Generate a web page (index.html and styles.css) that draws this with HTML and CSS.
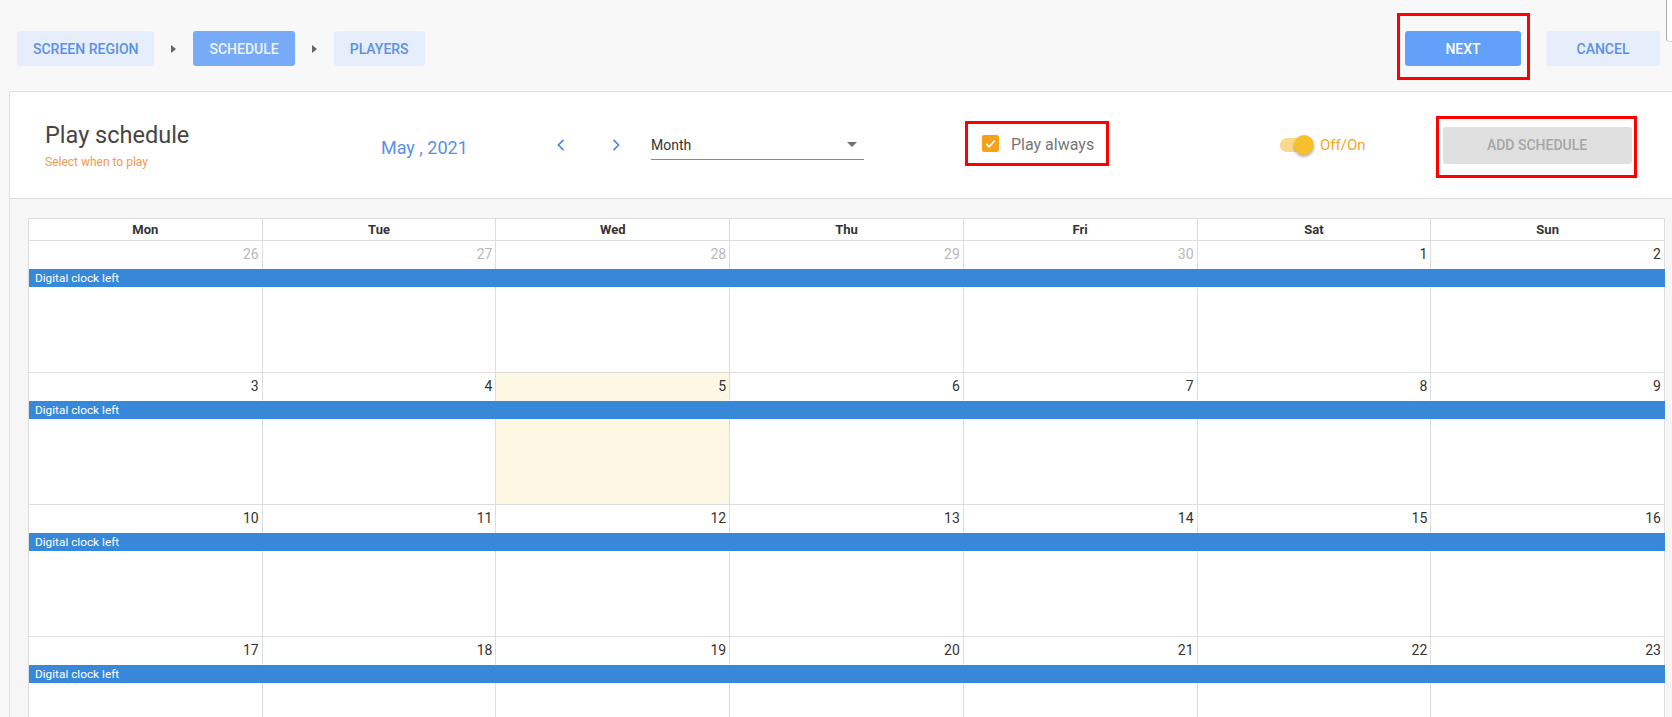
FILE: index.html
```html
<!DOCTYPE html>
<html lang="en">
<head>
    <meta charset="UTF-8">
    <meta name="viewport" content="width=device-width, initial-scale=1.0">
    <title>Play schedule</title>
    <link rel="stylesheet" href="styles.css">
</head>
<body>
    <div class="scroll-edge"></div>

    <div class="topbar">
        <div class="steps">
            <button class="step">Screen region</button>
            <span class="step-arrow"></span>
            <button class="step active">Schedule</button>
            <span class="step-arrow"></span>
            <button class="step">Players</button>
        </div>
        <div class="actions">
            <div class="mark next-mark">
                <button class="btn-next">Next</button>
            </div>
            <button class="btn-cancel">Cancel</button>
        </div>
    </div>

    <div class="panel">
        <div class="panel-header">
            <div class="title-block">
                <div class="title">Play schedule</div>
                <div class="subtitle">Select when to play</div>
            </div>
            <div class="month-label">May , 2021</div>
            <button class="nav-btn prev">
                <svg width="16" height="16" viewBox="0 0 24 24"><polyline points="15 5 8 12 15 19" fill="none" stroke="#4a86e8" stroke-width="2.6" stroke-linecap="round" stroke-linejoin="round"/></svg>
            </button>
            <button class="nav-btn next">
                <svg width="16" height="16" viewBox="0 0 24 24"><polyline points="9 5 16 12 9 19" fill="none" stroke="#4a86e8" stroke-width="2.6" stroke-linecap="round" stroke-linejoin="round"/></svg>
            </button>
            <div class="view-select">
                <span>Month</span>
                <span class="caret"></span>
            </div>
            <div class="mark play-always">
                <span class="checkbox">
                    <svg width="13" height="13" viewBox="0 0 24 24"><polyline points="4 12.5 9.5 18 20 6.5" fill="none" stroke="#fff" stroke-width="3"/></svg>
                </span>
                <span class="check-label">Play always</span>
            </div>
            <div class="toggle">
                <span class="track"><span class="knob"></span></span>
                <span class="toggle-label">Off/On</span>
            </div>
            <div class="mark add-mark">
                <button class="btn-add" disabled>Add schedule</button>
            </div>
        </div>

        <div class="calendar-area">
            <div class="calendar">
                <div class="day-names">
                    <div>Mon</div><div>Tue</div><div>Wed</div><div>Thu</div><div>Fri</div><div>Sat</div><div>Sun</div>
                </div>

                <div class="week">
                    <div class="cell c1"></div><div class="cell c2"></div><div class="cell c3"></div><div class="cell c4"></div><div class="cell c5"></div><div class="cell c6"></div><div class="cell c7"></div>
                    <div class="num c1 other">26</div><div class="num c2 other">27</div><div class="num c3 other">28</div><div class="num c4 other">29</div><div class="num c5 other">30</div><div class="num c6">1</div><div class="num c7">2</div>
                    <div class="event">Digital clock left</div>
                </div>

                <div class="week">
                    <div class="cell c1"></div><div class="cell c2"></div><div class="cell c3 today"></div><div class="cell c4"></div><div class="cell c5"></div><div class="cell c6"></div><div class="cell c7"></div>
                    <div class="num c1">3</div><div class="num c2">4</div><div class="num c3">5</div><div class="num c4">6</div><div class="num c5">7</div><div class="num c6">8</div><div class="num c7">9</div>
                    <div class="event">Digital clock left</div>
                </div>

                <div class="week">
                    <div class="cell c1"></div><div class="cell c2"></div><div class="cell c3"></div><div class="cell c4"></div><div class="cell c5"></div><div class="cell c6"></div><div class="cell c7"></div>
                    <div class="num c1">10</div><div class="num c2">11</div><div class="num c3">12</div><div class="num c4">13</div><div class="num c5">14</div><div class="num c6">15</div><div class="num c7">16</div>
                    <div class="event">Digital clock left</div>
                </div>

                <div class="week">
                    <div class="cell c1"></div><div class="cell c2"></div><div class="cell c3"></div><div class="cell c4"></div><div class="cell c5"></div><div class="cell c6"></div><div class="cell c7"></div>
                    <div class="num c1">17</div><div class="num c2">18</div><div class="num c3">19</div><div class="num c4">20</div><div class="num c5">21</div><div class="num c6">22</div><div class="num c7">23</div>
                    <div class="event">Digital clock left</div>
                </div>
            </div>
        </div>
    </div>
</body>
</html>
```

FILE: styles.css
```css
body {
    font-family: Roboto, 'Liberation Sans', sans-serif;
    background-color: #f8f8f8;
    margin: 0;
    padding: 0;
    width: 1672px;
    height: 717px;
    overflow: hidden;
    position: relative;
}

button {
    font-family: inherit;
    border: none;
    cursor: pointer;
}

.scroll-edge {
    position: absolute;
    top: 0;
    right: 0;
    width: 5px;
    height: 41px;
    border-left: 1px solid #a9a9a9;
    border-bottom: 1px solid #d0d0d0;
    border-bottom-left-radius: 4px;
    background-color: #fff;
}

/* top bar */
.topbar {
    height: 91px;
    box-sizing: border-box;
    display: flex;
    justify-content: space-between;
    padding-left: 17px;
}

.steps {
    display: flex;
    align-items: center;
    height: 35px;
    margin-top: 31px;
}

.step {
    height: 35px;
    padding: 0 16px;
    background-color: #e7eefb;
    color: #5b90e8;
    font-size: 14px;
    font-weight: 500;
    text-transform: uppercase;
    border-radius: 3px;
}

.step.active {
    background-color: #77aaf7;
    color: #edf3fe;
}

.step-arrow {
    width: 0;
    height: 0;
    border-top: 4.5px solid transparent;
    border-bottom: 4.5px solid transparent;
    border-left: 5px solid #666;
    margin: 0 17px 0 17px;
}

.actions {
    display: flex;
    align-items: flex-start;
    margin-top: 13px;
    margin-right: 12px;
}

.mark {
    border: 3px solid #f00;
    box-sizing: border-box;
}

.next-mark {
    padding: 15px 6px 11px 5px;
}

.btn-next {
    width: 116px;
    height: 35px;
    background-color: #62a0fa;
    color: #fff;
    font-size: 14px;
    font-weight: 500;
    text-transform: uppercase;
    border-radius: 3px;
    display: block;
}

.btn-cancel {
    width: 114px;
    height: 35px;
    margin-top: 18px;
    margin-left: 16px;
    background-color: #e7eefb;
    color: #5b90e8;
    font-size: 14px;
    font-weight: 500;
    text-transform: uppercase;
    border-radius: 3px;
}

/* panel */
.panel {
    margin-left: 9px;
    border-left: 1px solid #dedede;
    border-top: 1px solid #dedede;
    background-color: #f6f6f6;
    height: 626px;
}

.panel-header {
    height: 106px;
    background-color: #fff;
    border-bottom: 1px solid #dcdcdc;
    display: flex;
    align-items: center;
    padding-left: 35px;
}

.title-block {
    width: 336px;
    margin-top: -1px;
}

.title {
    font-size: 23.5px;
    color: #454545;
    line-height: 28px;
}

.subtitle {
    font-size: 12px;
    color: #ee9a55;
    margin-top: 6px;
}

.month-label {
    font-size: 18px;
    color: #5b90e8;
    width: 168px;
    margin-top: 4px;
}

.nav-btn {
    width: 24px;
    height: 24px;
    background: none;
    padding: 0;
    display: flex;
    align-items: center;
    justify-content: center;
}

.nav-btn.next {
    margin-left: 31px;
}

.view-select {
    width: 213px;
    height: 30px;
    box-sizing: border-box;
    margin-left: 23px;
    border-bottom: 1px solid #8a8a8a;
    display: flex;
    justify-content: space-between;
    align-items: center;
    font-size: 14px;
    color: #333;
    padding-right: 7px;
}

.caret {
    width: 0;
    height: 0;
    border-left: 5px solid transparent;
    border-right: 5px solid transparent;
    border-top: 5px solid #707070;
}

.play-always {
    margin-left: 101px;
    height: 45px;
    width: 144px;
    display: flex;
    align-items: center;
    padding-left: 14px;
    margin-top: -3px;
}

.checkbox {
    width: 17px;
    height: 17px;
    border-radius: 2px;
    background-color: #f7a11a;
    display: flex;
    align-items: center;
    justify-content: center;
}

.check-label {
    margin-left: 12px;
    font-size: 16px;
    color: #767676;
    margin-top: 1px;
}

.toggle {
    margin-left: 171px;
    display: flex;
    align-items: center;
}

.track {
    width: 27px;
    height: 14px;
    border-radius: 7px;
    background-color: #fad98a;
    position: relative;
}

.knob {
    position: absolute;
    right: -7px;
    top: -3px;
    width: 20px;
    height: 20px;
    border-radius: 50%;
    background-color: #f6bf2d;
    box-shadow: 0 2px 3px rgba(0, 0, 0, 0.3);
}

.toggle-label {
    margin-left: 13px;
    font-size: 15px;
    color: #f5a623;
}

.add-mark {
    margin-left: 70px;
    width: 201px;
    height: 62px;
    padding: 8px 3px 10px 4px;
    margin-top: 3px;
}

.btn-add {
    width: 189px;
    height: 37px;
    background-color: #e0e0e0;
    color: #a6a6a6;
    font-size: 14px;
    font-weight: 500;
    text-transform: uppercase;
    border-radius: 3px;
    cursor: default;
}

/* calendar */
.calendar-area {
    padding: 19px 7px 0 18px;
}

.calendar {
    border-top: 1px solid #ddd;
    border-left: 1px solid #ddd;
    background-color: #fff;
}

.day-names {
    display: grid;
    grid-template-columns: repeat(7, 1fr);
}

.day-names div {
    height: 21px;
    line-height: 21px;
    text-align: center;
    font-size: 13px;
    font-weight: 700;
    color: #333;
    border-right: 1px solid #ddd;
    border-bottom: 1px solid #ddd;
}

.week {
    display: grid;
    grid-template-columns: repeat(7, 1fr);
    grid-template-rows: 28px 18px 86px;
}

.cell {
    grid-row: 1 / -1;
    border-right: 1px solid #ddd;
    border-bottom: 1px solid #ddd;
}

.cell.today {
    background-color: #fcf8e3;
}

.c1 { grid-column: 1; }
.c2 { grid-column: 2; }
.c3 { grid-column: 3; }
.c4 { grid-column: 4; }
.c5 { grid-column: 5; }
.c6 { grid-column: 6; }
.c7 { grid-column: 7; }

.num {
    grid-row: 1;
    text-align: right;
    padding: 5px 4px 0 0;
    font-size: 14px;
    color: #333;
}

.num.other {
    color: #b9b9b9;
}

.event {
    grid-row: 2;
    grid-column: 1 / -1;
    background-color: #3788d8;
    color: #fff;
    font-size: 11.8px;
    line-height: 18px;
    padding-left: 6px;
}
```
